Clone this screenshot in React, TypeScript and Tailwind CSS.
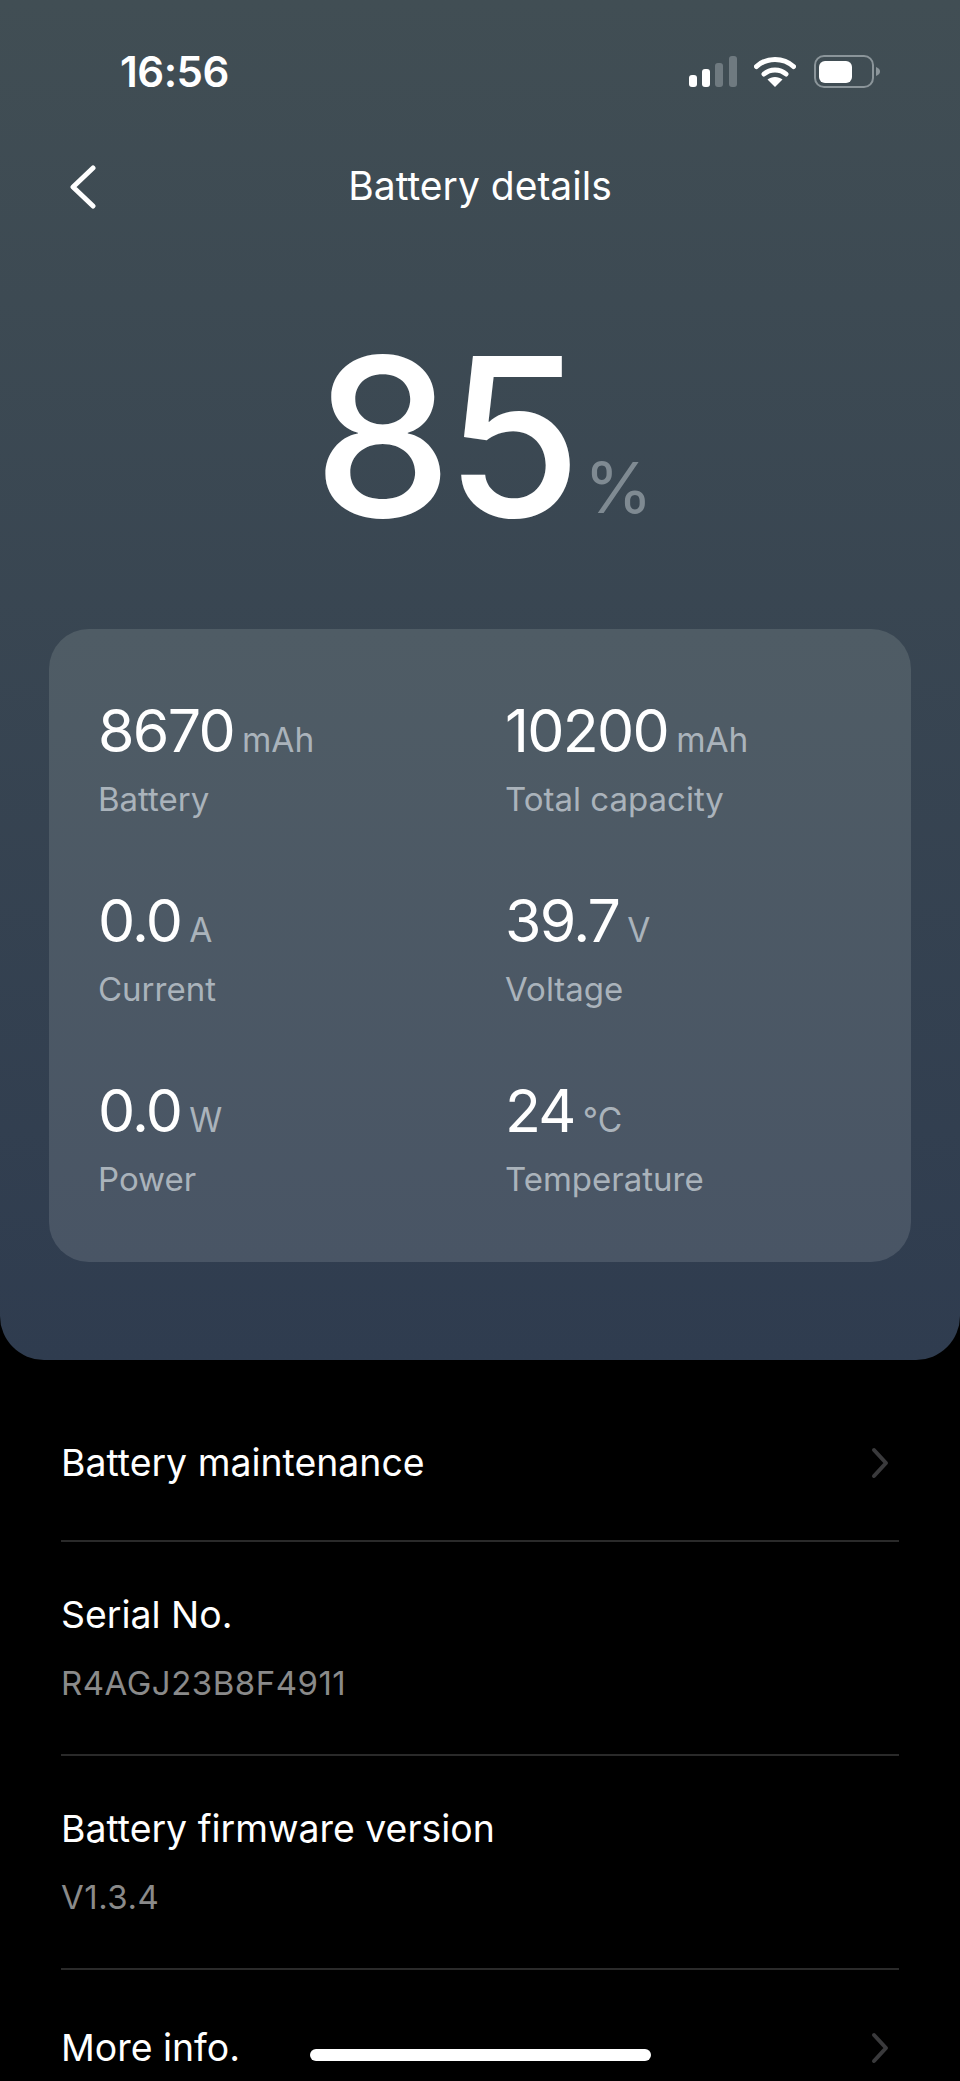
const stats = [
  { value: '8670', unit: 'mAh', label: 'Battery' },
  { value: '10200', unit: 'mAh', label: 'Total capacity' },
  { value: '0.0', unit: 'A', label: 'Current' },
  { value: '39.7', unit: 'V', label: 'Voltage' },
  { value: '0.0', unit: 'W', label: 'Power' },
  { value: '24', unit: '°C', label: 'Temperature' },
]

function StatusIcons() {
  return (
    <div className="flex items-center">
      <svg width="48" height="31" viewBox="0 0 48 31" className="mr-[17px]">
        <rect x="0" y="19" width="8" height="12" rx="3" fill="#ffffff" />
        <rect x="13" y="13" width="8" height="18" rx="3" fill="#ffffff" />
        <rect x="26" y="7" width="8" height="24" rx="3" fill="#6f7a80" />
        <rect x="40" y="0" width="8" height="31" rx="3" fill="#6f7a80" />
      </svg>
      <svg width="42" height="31" viewBox="0 0 42 31" className="mr-[18px]" fill="none">
        <path d="M2.5 10.5 C12.5 1 29.5 1 39.5 10.5" stroke="#ffffff" strokeWidth="5" strokeLinecap="round" />
        <path d="M10 18 C16 12.5 26 12.5 32 18" stroke="#ffffff" strokeWidth="5" strokeLinecap="round" />
        <path d="M21 31 L13.5 23.5 C17.5 20 24.5 20 28.5 23.5 Z" fill="#ffffff" />
      </svg>
      <svg width="67" height="33" viewBox="0 0 67 33" fill="none">
        <rect x="1" y="1" width="58" height="31" rx="9" stroke="#8b959a" strokeWidth="2" />
        <rect x="5" y="6" width="33" height="22" rx="6" fill="#ffffff" />
        <path d="M62 12 C65 13 66 15 66 16.5 C66 18 65 20 62 21 Z" fill="#8b959a" />
      </svg>
    </div>
  )
}

function Row({ title, sub, arrow }: { title: string; sub?: string; arrow?: boolean }) {
  return (
    <div className="flex items-center justify-between">
      <div>
        <div className="text-[37.4px] leading-[48px] text-white">{title}</div>
        {sub && <div className="mt-[20px] text-[33px] leading-[48px] tracking-[0.5px] text-[#8a8a8a]">{sub}</div>}
      </div>
      {arrow && (
        <svg width="18" height="32" viewBox="0 0 18 32" fill="none" className="mr-[10px]">
          <path d="M3 3 L15 16 L3 29" stroke="#3a3a3c" strokeWidth="4" strokeLinecap="round" strokeLinejoin="round" />
        </svg>
      )}
    </div>
  )
}

export default function App() {
  return (
    <div className="relative h-[2081px] w-[960px] overflow-hidden bg-black font-['Inter',sans-serif]">
      <div className="h-[1360px] rounded-b-[44px] bg-gradient-to-b from-[#414e54] to-[#2f3c4f] px-[49px] pt-[56px]">
        <div className="flex h-[31px] items-center justify-between pl-[71px] pr-[30px]">
          <span className="text-[42px] font-semibold leading-none tracking-[-0.5px] text-white">16:56</span>
          <StatusIcons />
        </div>

        <div className="relative mt-[68px] flex h-[60px] items-center justify-center">
          <svg width="28" height="44" viewBox="0 0 28 44" fill="none" className="absolute left-[20px] top-[10px]">
            <path d="M24 3 L4 22 L24 41" stroke="#ffffff" strokeWidth="5" strokeLinecap="round" strokeLinejoin="round" />
          </svg>
          <span className="text-[39px] leading-none text-white">Battery details</span>
        </div>

        <div className="flex h-[414px] items-start justify-center pl-[6px] pt-[106px]">
          <span className="text-[221px] font-[450] leading-[232px] tracking-[-7px] text-white">85</span>
          <span className="ml-[9px] mt-[132px] text-[70px] font-normal leading-[70px] text-[#7f8a92]">%</span>
        </div>

        <div className="grid h-[633px] grid-cols-[407px_1fr] content-start rounded-[40px] bg-gradient-to-b from-[#4f5c65] to-[#495565] pl-[49px] pt-[72px]">
          {stats.map((stat) => (
            <div key={stat.label} className="h-[190px]">
              <div className="flex items-baseline">
                <span className="text-[59px] leading-[60px] tracking-[-1.7px] text-white">{stat.value}</span>
                <span className="ml-[8px] text-[33.5px] leading-[60px] text-[#aab3bb]">{stat.unit}</span>
              </div>
              <div className="mt-[9px] text-[33px] leading-[40px] text-[#aab3bb]">{stat.label}</div>
            </div>
          ))}
        </div>
      </div>

      <div className="px-[61px]">
        <div className="border-b-2 border-[#2a2a2a] pb-[53px] pt-[79px]">
          <Row title="Battery maintenance" arrow />
        </div>
        <div className="border-b-2 border-[#2a2a2a] pb-[47px] pt-[49px]">
          <Row title="Serial No." sub="R4AGJ23B8F4911" />
        </div>
        <div className="border-b-2 border-[#2a2a2a] pb-[47px] pt-[49px]">
          <Row title="Battery firmware version" sub="V1.3.4" />
        </div>
        <div className="pt-[54px]">
          <Row title="More info." arrow />
        </div>
      </div>

      <div className="absolute bottom-[20px] left-[310px] h-[12px] w-[341px] rounded-full bg-white" />
    </div>
  )
}
